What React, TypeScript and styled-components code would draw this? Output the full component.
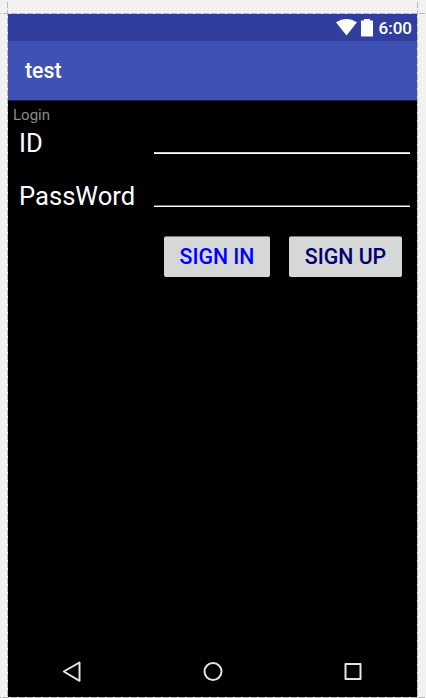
import React from "react";
import styled, { createGlobalStyle } from "styled-components";

const GlobalStyle = createGlobalStyle`
  * { box-sizing: border-box; }
  html, body { margin: 0; padding: 0; background: #f2f2f2; overflow: hidden; }
  body { font-family: Roboto, "Liberation Sans", sans-serif; }
`;

const Canvas = styled.main`
  position: relative;
  width: 426px;
  height: 698px;
  padding: 14px 9px 1px 8px;
  background: #f2f2f2;
`;

const Guide = styled.span<{ $vertical?: boolean; $at: number }>`
  position: absolute;
  ${(p) =>
    p.$vertical
      ? `top: 0; bottom: 0; left: ${p.$at}px; width: 1px;`
      : `left: 0; right: 0; top: ${p.$at}px; height: 1px;`}
  background: repeating-linear-gradient(
    ${(p) => (p.$vertical ? "180deg" : "90deg")},
    #b9b9b9 0 1px,
    transparent 1px 3px,
    #b9b9b9 3px 8px
  );
  background-position: ${(p) => (p.$vertical ? "0 -1px" : "0 0")};
`;

const Device = styled.section`
  display: flex;
  flex-direction: column;
  height: 683px;
  background: #000;
`;

const StatusBar = styled.div`
  display: flex;
  align-items: center;
  justify-content: flex-end;
  height: 27px;
  padding-right: 5px;
  background: #303f9f;
  color: #fff;
`;

const StatusIcons = styled.svg`
  display: block;
  width: 39px;
  height: 27px;
`;

const Clock = styled.time`
  margin-left: 4px;
  padding-top: 2px;
  font-size: 17px;
  font-weight: 500;
  line-height: 25px;
`;

const AppBar = styled.header`
  height: 60px;
  padding-left: 17px;
  background: #3f51b5;
  border-bottom: 1px solid #19204a;
`;

const Title = styled.h1`
  margin: 0;
  color: #fff;
  font-size: 21.3px;
  font-weight: 500;
  line-height: 59px;
`;

const Content = styled.form`
  flex: 1;
  padding: 4px 7px 0 5px;
`;

const Caption = styled.div`
  height: 19px;
  color: #8b8b8b;
  font-size: 15px;
  line-height: 20px;
`;

const Field = styled.label<{ $height: number }>`
  display: grid;
  grid-template-columns: 135px 1fr;
  height: ${(p) => p.$height}px;
  padding-left: 6px;
  color: #fff;
  font-size: 25.6px;
  line-height: 39px;
`;

const Input = styled.input<{ $edge: string }>`
  min-width: 0;
  width: 100%;
  height: 30px;
  padding: 0;
  border: 0;
  border-bottom: 1px solid #fff;
  border-radius: 0;
  box-shadow: inset 0 -1px ${(p) => p.$edge};
  outline: 0;
  background: transparent;
  color: #fff;
  font: inherit;
`;

const Actions = styled.div`
  display: flex;
  justify-content: flex-end;
  gap: 19px;
  padding: 5px 8px 0 0;
`;

const Button = styled.button<{ $width: number; $color: string }>`
  width: ${(p) => p.$width}px;
  height: 41px;
  padding: 0;
  border: 0;
  border-top: 1px solid #777878;
  border-radius: 2px;
  background: #d6d7d7;
  color: ${(p) => p.$color};
  font-family: inherit;
  font-size: 21.3px;
  font-weight: 500;
  line-height: 40px;
  white-space: nowrap;
`;

const NavBar = styled.nav`
  display: flex;
  justify-content: space-between;
  height: 51px;
  padding: 13px 51px 0 51px;
`;

const NavIcon = styled.svg`
  display: block;
  width: 26px;
  height: 26px;
  fill: none;
  stroke: #e4e4e4;
  stroke-width: 2;
  stroke-linejoin: round;
`;

export default function App() {
  return (
    <>
      <GlobalStyle />
      <Canvas>
        <Guide $at={13} />
        <Guide $at={697} />
        <Guide $vertical $at={7} />
        <Guide $vertical $at={417} />
        <Device>
          <StatusBar>
            <StatusIcons viewBox="0 0 39 27" fill="#fff">
              <path d="M0 8.2 Q10.5 2 21 8.2 L10.5 21.4Z" />
              <path d="M25 6.5h3V5h6v1.5h3V22.5h-12Z" />
            </StatusIcons>
            <Clock>6:00</Clock>
          </StatusBar>
          <AppBar>
            <Title>test</Title>
          </AppBar>
          <Content>
            <Caption>Login</Caption>
            <Field $height={53}>
              ID
              <Input aria-label="ID" $edge="#d0d0d0" />
            </Field>
            <Field $height={54}>
              PassWord
              <Input type="password" aria-label="PassWord" $edge="#777" />
            </Field>
            <Actions>
              <Button type="button" $width={106} $color="#0000ff">SIGN IN</Button>
              <Button type="button" $width={113} $color="#00006e">SIGN UP</Button>
            </Actions>
          </Content>
          <NavBar>
            <NavIcon viewBox="0 0 26 26">
              <path d="M4.8 12.5 20.5 3.5V21.8Z" />
            </NavIcon>
            <NavIcon viewBox="0 0 26 26">
              <circle cx="13" cy="12.5" r="8.5" />
            </NavIcon>
            <NavIcon viewBox="0 0 26 26">
              <rect x="5.5" y="5" width="15" height="15" />
            </NavIcon>
          </NavBar>
        </Device>
      </Canvas>
    </>
  );
}
